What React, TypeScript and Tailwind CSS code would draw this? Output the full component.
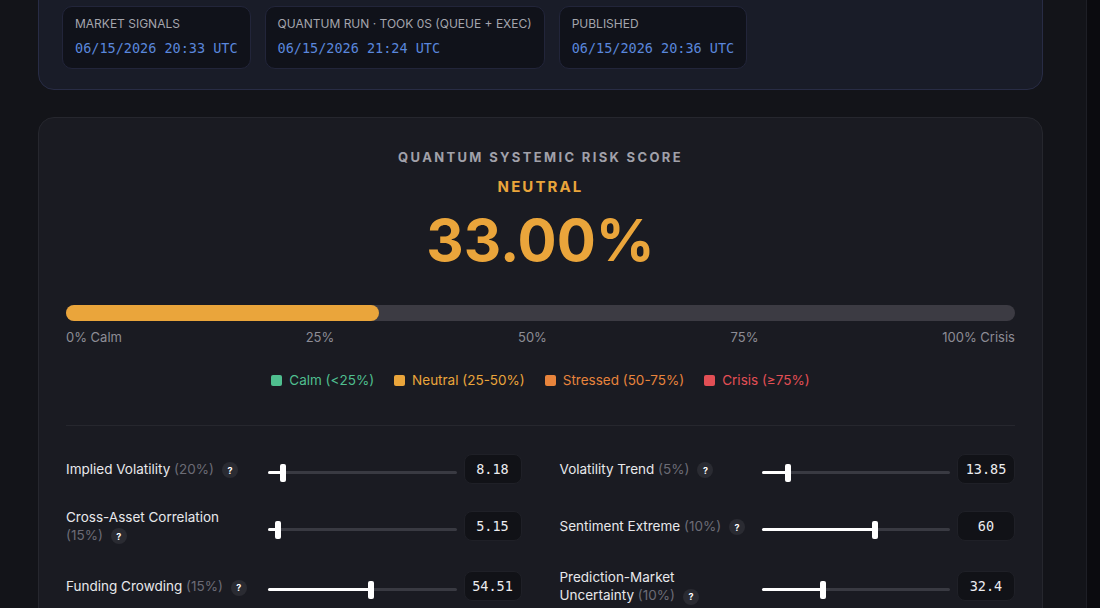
import React from 'react';

const stamps = [
	{ label: 'Market Signals', value: '06/15/2026 20:33 UTC' },
	{ label: 'Quantum Run · Took 0s (Queue + Exec)', value: '06/15/2026 21:24 UTC' },
	{ label: 'Published', value: '06/15/2026 20:36 UTC' },
];

const legend = [
	{ label: 'Calm (<25%)', box: 'bg-[#4fbf8f]', text: 'text-[#4fbf8f]' },
	{ label: 'Neutral (25-50%)', box: 'bg-[#eaa53b]', text: 'text-[#eaa53b]' },
	{ label: 'Stressed (50-75%)', box: 'bg-[#e8843c]', text: 'text-[#e8843c]' },
	{ label: 'Crisis (≥75%)', box: 'bg-[#e24f55]', text: 'text-[#e24f55]' },
];

const factors = [
	{ label: 'Implied Volatility', weight: 20, value: '8.18', pct: 8.18 },
	{ label: 'Volatility Trend', weight: 5, value: '13.85', pct: 13.85 },
	{ label: 'Cross-Asset Correlation', weight: 15, value: '5.15', pct: 5.15 },
	{ label: 'Sentiment Extreme', weight: 10, value: '60', pct: 60 },
	{ label: 'Funding Crowding', weight: 15, value: '54.51', pct: 54.51 },
	{ label: 'Prediction-Market Uncertainty', weight: 10, value: '32.4', pct: 32.4 },
];

function FactorRow({ label, weight, value, pct }: { label: string; weight: number; value: string; pct: number }) {
	return (
		<div className="flex items-center">
			<div className="w-[190px] shrink-0 text-[13.5px] leading-[18px] text-[#e8e8eb]">
				{label}{' '}
				<span className="whitespace-nowrap">
					<span className="text-[#6c6c76]">({weight}%)</span>
					<span className="ml-2 inline-flex h-4 w-4 items-center justify-center rounded-full bg-[#2a2b32] align-middle text-[9px] leading-none font-bold text-white">
						?
					</span>
				</span>
			</div>
			<div className="relative mt-2 ml-3 h-[18px] flex-1">
				<div className="absolute top-[7px] left-0 h-[3px] w-full rounded-full bg-[#393a42]" />
				<div className="absolute top-[7px] left-0 h-[3px] rounded-full bg-white" style={{ width: `${pct}%` }} />
				<div
					className="absolute top-0 h-[18px] w-[6px] -translate-x-1/2 rounded-[2px] bg-white"
					style={{ left: `${pct}%` }}
				/>
			</div>
			<div className="ml-[7px] flex h-[30px] w-[58px] shrink-0 items-center justify-center rounded-lg border border-[#1f2027] bg-[#111217] font-['DejaVu_Sans_Mono',monospace] text-[13.5px] text-[#ececef]">
				{value}
			</div>
		</div>
	);
}

export default function App() {
	const score = 33;
	return (
		<div className="flex h-[608px] w-full overflow-hidden bg-[#131419] font-['Inter',sans-serif]">
			<div className="flex-1 pl-[38px] pr-[43px]">
				<div className="-mt-[30px] rounded-2xl border border-[#282c45] bg-[#191c28] px-[23px] pt-[35px] pb-[20px]">
					<div className="flex gap-[14px]">
						{stamps.map((s) => (
							<div key={s.label} className="rounded-[10px] border border-[#22253a] bg-[#10121a] px-3 pt-[9px] pb-[10px]">
								<p className="text-[12px] leading-4 uppercase text-[#a4a5ad]">{s.label}</p>
								<p className="mt-[6px] font-['DejaVu_Sans_Mono',monospace] text-[13.5px] leading-5 text-[#5a87dc]">{s.value}</p>
							</div>
						))}
					</div>
				</div>

				<div className="mt-[27px] rounded-2xl border border-[#26272e] bg-[#1a1b22] px-[27px] pt-[29px] pb-10">
					<div className="flex flex-col items-center">
						<p className="text-[13px] leading-5 font-bold tracking-[0.18em] uppercase text-[#a1a1aa]">Quantum Systemic Risk Score</p>
						<p className="mt-[10px] text-[15px] leading-5 font-bold tracking-[0.14em] uppercase text-[#eaa53b]">Neutral</p>
						<p className="mt-3 text-[58px] leading-[62px] font-bold text-[#eaa53b]">{score.toFixed(2)}%</p>
					</div>

					<div className="mt-[34px] h-4 w-full rounded-full bg-[#3c3b43]">
						<div className="h-4 rounded-full bg-[#eaa53b]" style={{ width: `${score}%` }} />
					</div>
					<div className="mt-[7px] flex justify-between text-[13px] leading-[18px] text-[#8d8d96]">
						<span>0% Calm</span>
						<span>25%</span>
						<span>50%</span>
						<span>75%</span>
						<span>100% Crisis</span>
					</div>

					<div className="mt-6 flex justify-center gap-5">
						{legend.map((l) => (
							<div key={l.label} className="flex items-center gap-[7px]">
								<span className={`h-[11px] w-[11px] rounded-[2px] ${l.box}`} />
								<span className={`text-[13.5px] leading-5 ${l.text}`}>{l.label}</span>
							</div>
						))}
					</div>

					<div className="mt-[35px] h-px w-full bg-[#26272e]" />

					<div className="mt-[28px] grid grid-cols-2 gap-x-[38px] gap-y-6">
						{factors.map((f) => (
							<FactorRow key={f.label} {...f} />
						))}
					</div>
				</div>
			</div>
			<div className="w-[14px] border-l border-[#1e1f26] bg-[#0b0b0f]" />
		</div>
	);
}
